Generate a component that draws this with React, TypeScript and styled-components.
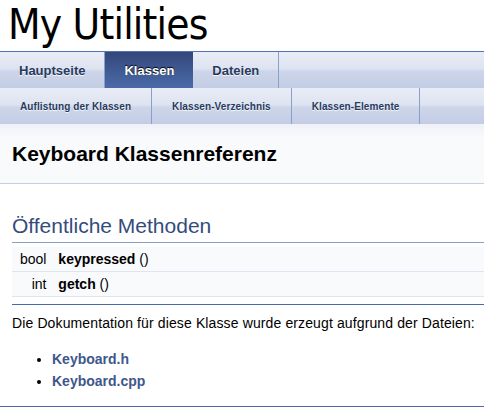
import React from "react";
import styled, { createGlobalStyle } from "styled-components";

const GlobalStyle = createGlobalStyle`
  html, body {
    margin: 0;
    padding: 0;
    background: #ffffff;
  }
  body {
    font-family: "Liberation Sans", Arial, sans-serif;
    font-size: 14px;
    color: #000000;
  }
`;

const TitleArea = styled.div`
  border-bottom: 1px solid #5373b4;
  height: 51px;
  padding-left: 8px;
`;

const ProjectName = styled.div`
  font-family: "DejaVu Sans Condensed", "DejaVu Sans", sans-serif;
  font-size: 42px;
  line-height: 50px;
  letter-spacing: -0.8px;
  color: #000000;
  white-space: nowrap;
`;

const TabRow = styled.ul`
  display: flex;
  margin: 0;
  padding: 0;
  list-style: none;
  height: 36px;
  background: linear-gradient(
    to bottom,
    #e9edf6 0%,
    #dde3f0 46%,
    #ccd5e9 54%,
    #c3cde4 100%
  );
`;

const Tab = styled.li<{ $active?: boolean; $small?: boolean }>`
  display: flex;
  align-items: center;
  height: 36px;
  padding: ${(p) => (p.$small ? "0 20px" : "0 19px")};
  font-family: "Liberation Sans", Arial, sans-serif;
  font-weight: bold;
  font-size: ${(p) => (p.$small ? "10px" : "13px")};
  letter-spacing: ${(p) => (p.$small ? "0.1px" : "0")};
  white-space: nowrap;
  box-sizing: border-box;
  color: ${(p) => (p.$active ? "#ffffff" : "#283a5d")};
  text-shadow: ${(p) =>
    p.$active
      ? "0px -1px 1px rgba(0, 0, 0, 1)"
      : "0px 1px 1px rgba(255, 255, 255, 0.9)"};
  background: ${(p) =>
    p.$active
      ? "linear-gradient(to bottom, #33477a 0%, #3f5a92 50%, #4a6aa8 100%)"
      : "transparent"};
  border-right: ${(p) => (p.$active ? "none" : "1px solid #8a9fcc")};
`;

const Header = styled.div`
  background: linear-gradient(to bottom, #eef1f7 0px, #f9fafc 14px, #f9fafc 100%);
  border-bottom: 1px solid #c4cfe5;
  padding: 5px 5px 5px 10px;
`;

const PageTitle = styled.div`
  margin: 10px 2px;
  font-size: 21px;
  font-weight: bold;
  line-height: 29px;
`;

const Contents = styled.div`
  margin-left: 12px;
`;

const GroupHeader = styled.h2`
  margin: 22px 0 0 0;
  padding: 8px 0 4px 0;
  font-size: 21px;
  font-weight: normal;
  line-height: 24px;
  color: #354c7b;
  border-bottom: 1px solid #879ecb;
`;

const MemberTable = styled.table`
  width: 100%;
  margin-top: 4px;
  border-spacing: 0;
  border-collapse: collapse;
`;

const MemberRow = styled.tr`
  border-bottom: 1px solid #dee4f0;
`;

const MemItemLeft = styled.td`
  background: #f9fafc;
  height: 24px;
  padding: 0 0 0 8px;
  text-align: right;
  white-space: nowrap;
  width: 1%;
  font-size: 14px;
`;

const MemItemRight = styled.td`
  background: #f9fafc;
  height: 24px;
  padding: 0 0 0 8px;
  font-size: 14px;
`;

const MemberName = styled.span`
  font-weight: bold;
`;

const Rule = styled.hr<{ $full?: boolean }>`
  height: 0;
  border: none;
  border-top: 1px solid #4a6aaa;
  margin: ${(p) => (p.$full ? "0" : "7px 0 0 0")};
`;

const Para = styled.p`
  margin: 7px 0 14px 0;
  line-height: 22px;
  letter-spacing: 0.12px;
  white-space: nowrap;
`;

const FileList = styled.ul`
  margin: 14px 0 14px 0;
  padding-left: 40px;
  line-height: 22px;
`;

const FileLink = styled.a`
  color: #3d578c;
  font-weight: bold;
  text-decoration: none;
`;

const tabs = [
  { label: "Hauptseite" },
  { label: "Klassen", active: true },
  { label: "Dateien" },
];

const subTabs = ["Auflistung der Klassen", "Klassen-Verzeichnis", "Klassen-Elemente"];

const members = [
  { type: "bool", name: "keypressed" },
  { type: "int", name: "getch" },
];

const files = ["Keyboard.h", "Keyboard.cpp"];

export default function App() {
  return (
    <>
      <GlobalStyle />
      <TitleArea>
        <ProjectName>My Utilities</ProjectName>
      </TitleArea>
      <nav>
        <TabRow>
          {tabs.map((t) => (
            <Tab key={t.label} $active={t.active}>
              {t.label}
            </Tab>
          ))}
        </TabRow>
        <TabRow>
          {subTabs.map((t) => (
            <Tab key={t} $small>
              {t}
            </Tab>
          ))}
        </TabRow>
      </nav>
      <Header>
        <PageTitle>Keyboard Klassenreferenz</PageTitle>
      </Header>
      <Contents>
        <GroupHeader>Öffentliche Methoden</GroupHeader>
        <MemberTable>
          <tbody>
            {members.map((m) => (
              <MemberRow key={m.name}>
                <MemItemLeft>{m.type}&#160;</MemItemLeft>
                <MemItemRight>
                  <MemberName>{m.name}</MemberName> ()
                </MemItemRight>
              </MemberRow>
            ))}
          </tbody>
        </MemberTable>
        <Rule />
        <Para>Die Dokumentation für diese Klasse wurde erzeugt aufgrund der Dateien:</Para>
        <FileList>
          {files.map((f) => (
            <li key={f}>
              <FileLink href="#">{f}</FileLink>
            </li>
          ))}
        </FileList>
      </Contents>
      <Rule $full />
    </>
  );
}
